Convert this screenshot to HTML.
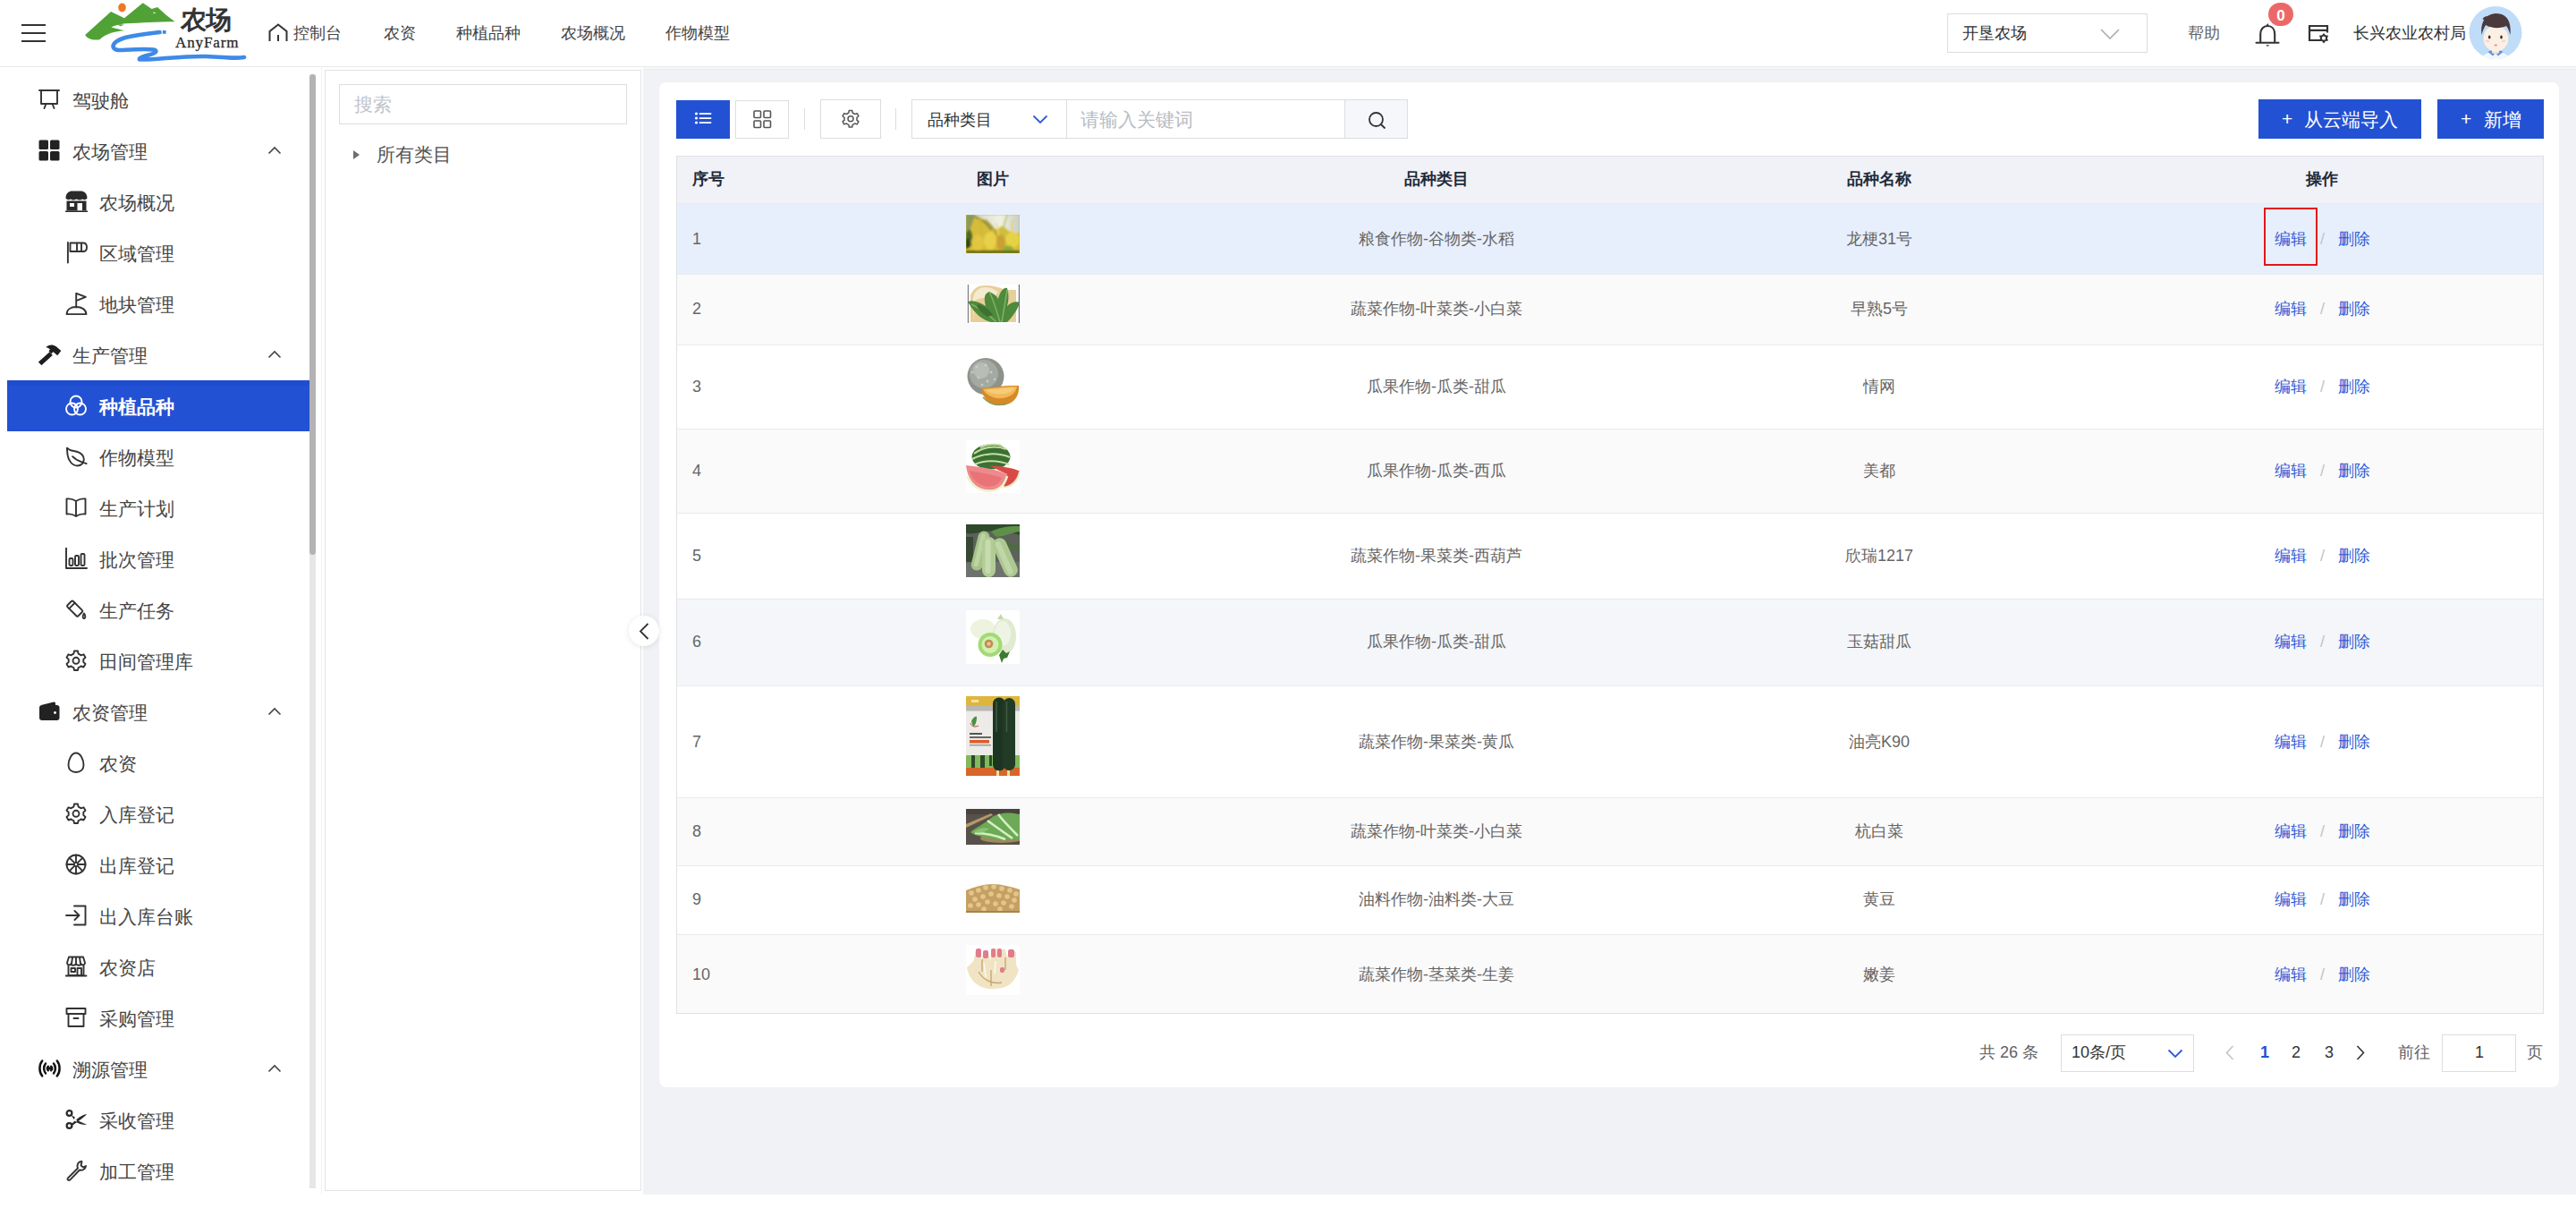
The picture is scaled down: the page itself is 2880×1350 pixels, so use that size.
<!DOCTYPE html>
<html><head><meta charset="utf-8">
<style>
*{box-sizing:border-box;margin:0;padding:0}
html,body{width:2880px;height:1350px;overflow:hidden;background:#fff;font-family:"Liberation Sans",sans-serif;color:#333}
.a{position:absolute}
.t{position:absolute;white-space:nowrap;line-height:1}
#hdr{left:0;top:0;width:2880px;height:75px;border-bottom:1px solid #e8e8e8;background:#fff}
.nav{font-size:18px;color:#444;top:28px}
#gray{left:719px;top:75px;width:2161px;height:1260px;background:#f0f2f5}
#side{left:0;top:75px;width:346px;height:1260px;background:#fff}
.mi{position:absolute;left:8px;width:338px;height:57px}
.mi .tx{position:absolute;top:18px;font-size:21px;line-height:21px;color:#3c3c3c;white-space:nowrap}
.mi svg{position:absolute}
#track{left:346px;top:83px;width:7px;height:1245px;background:#e6e6e6}
#thumb{left:346px;top:83px;width:7px;height:537px;background:#b3b3b3;border-radius:3.5px}
#tree{left:363px;top:78px;width:354px;height:1253px;border:1px solid #e2e3e5;background:#fff}
#card{left:737px;top:92px;width:2124px;height:1123px;background:#fff;border-radius:8px}
.btn{position:absolute;background:#2351d3;color:#fff}
.ob{position:absolute;border:1px solid #dcdddf;background:#fff}
.tbl{left:756px;top:174px;width:2088px;height:959px;border:1px solid #e6e8eb}
.row{position:absolute;left:757px;width:2086px;border-bottom:1px solid #ebeef5}
.cell{position:absolute;font-size:18px;line-height:18px;color:#666;white-space:nowrap}
.side{font-size:21px;line-height:21px}
.th{font-size:18px;line-height:18px;font-weight:bold;color:#1f2937}
.td{font-size:18px;line-height:18px;color:#666}
.pg{font-size:18px;line-height:18px;color:#606266}
.op{color:#2f5bd6}
</style></head><body>
<div id="hdr" class="a"></div>
<div id="gray" class="a"></div>
<div id="side" class="a"></div>
<div id="track" class="a"></div>
<div id="thumb" class="a"></div>
<div class="a" style="left:359px;top:75px;width:1px;height:1260px;background:#f2f2f2"></div>
<div class="a" style="left:719px;top:75px;width:2161px;height:2px;background:#f6f7f9"></div>
<div class="a" style="left:719px;top:77px;width:2161px;height:1px;background:#e9ebee"></div>
<div id="tree" class="a"></div>
<div id="card" class="a"></div>

<!--SIDE-->
<svg class="a" style="left:43px;top:99px" width="25" height="25" viewBox="0 0 25 25"><path d="M1,2 H23 M3,2 V17 H21 V2 M8.5,17 L6.5,22 M15.5,17 L17.5,22" stroke="#333" stroke-width="1.9" fill="none" stroke-linecap="round" stroke-linejoin="round" stroke-linecap="butt"/></svg>
<div class="t side" style="left:81px;top:101.5px;color:#464646;font-weight:normal">驾驶舱</div>
<svg class="a" style="left:43px;top:156px" width="25" height="25" viewBox="0 0 25 25"><rect x="0.5" y="0.5" width="10.5" height="10.5" rx="1.5" fill="#222"/><rect x="13" y="0.5" width="10.5" height="10.5" rx="1.5" fill="#222"/><rect x="0.5" y="13" width="10.5" height="10.5" rx="1.5" fill="#222"/><rect x="13" y="13" width="10.5" height="10.5" rx="1.5" fill="#222"/></svg>
<div class="t side" style="left:81px;top:158.5px;color:#464646;font-weight:normal">农场管理</div>
<svg class="a" style="left:299px;top:163px" width="16" height="10" viewBox="0 0 16 10"><path d="M1.5,8.5 L8,2 L14.5,8.5" fill="none" stroke="#444" stroke-width="1.6"/></svg>
<svg class="a" style="left:73px;top:213px" width="25" height="25" viewBox="0 0 25 25"><path d="M0.5,8.5 C0.5,3 4,0.5 8,0.5 H17 C21,0.5 24.5,3 24.5,8.5 C23,10.5 21,10.5 19,9.5 C17.5,10.8 15,10.8 12.5,9.5 C10,10.8 7.5,10.8 6,9.5 C4,10.5 2,10.5 0.5,8.5 Z" fill="#2a2a2a"/><path d="M1.5,11.5 V22.5 H23.5 V11.5 Z" fill="#2a2a2a"/><rect x="5" y="14" width="5" height="4" fill="#fff"/><rect x="13.5" y="14" width="5.5" height="8.5" fill="#fff"/><rect x="0" y="22.5" width="25" height="1.5" fill="#2a2a2a"/></svg>
<div class="t side" style="left:111px;top:215.5px;color:#464646;font-weight:normal">农场概况</div>
<svg class="a" style="left:73px;top:270px" width="25" height="25" viewBox="0 0 25 25"><path d="M2.9,1 V23.6" stroke="#333" stroke-width="1.9" fill="none" stroke-linecap="round" stroke-linejoin="round" stroke-linecap="butt"/><path d="M5.5,1.5 H20 C22.5,1.5 24,3.5 24,6.2 C24,9 22.5,11 20,11 H5.5 Z M13,1.5 V11 M18,1.5 V11" stroke="#333" stroke-width="1.9" fill="none" stroke-linecap="round" stroke-linejoin="round"/></svg>
<div class="t side" style="left:111px;top:272.5px;color:#464646;font-weight:normal">区域管理</div>
<svg class="a" style="left:73px;top:327px" width="25" height="25" viewBox="0 0 25 25"><path d="M12.2,16.5 V0.8 L22.8,4.8 L12.2,9.2" stroke="#333" stroke-width="1.9" fill="none" stroke-linecap="round" stroke-linejoin="round"/><path d="M1.6,24.2 C1.6,19 6,16 12.2,16 C18.4,16 23.4,19 23.4,24.2 Z" stroke="#333" stroke-width="1.9" fill="none" stroke-linecap="round" stroke-linejoin="round"/></svg>
<div class="t side" style="left:111px;top:329.5px;color:#464646;font-weight:normal">地块管理</div>
<svg class="a" style="left:43px;top:384px" width="25" height="25" viewBox="0 0 25 25"><path d="M-0.2,20.6 L12.5,9.3 L15.8,13 L3.4,24.3 Z" fill="#1e1e1e"/><path d="M8.4,4 C11,1 16,0.5 19.5,3 L25.3,8 L21.2,13.3 L16.5,9.2 L14.5,11.3 L11.4,8.2 L13,6.6 C11.8,5.4 10.4,4.6 8.4,4 Z" fill="#1e1e1e"/></svg>
<div class="t side" style="left:81px;top:386.5px;color:#464646;font-weight:normal">生产管理</div>
<svg class="a" style="left:299px;top:391px" width="16" height="10" viewBox="0 0 16 10"><path d="M1.5,8.5 L8,2 L14.5,8.5" fill="none" stroke="#444" stroke-width="1.6"/></svg>
<div class="a" style="left:8px;top:425px;width:338px;height:57px;background:#2351d3;border-top:6px solid #1f4dd0"></div>
<svg class="a" style="left:73px;top:441px" width="25" height="25" viewBox="0 0 25 25"><g fill="none" stroke="#fff" stroke-width="1.9"><circle cx="12" cy="8" r="6.5"/><circle cx="7.5" cy="16" r="6.5"/><circle cx="16.5" cy="16" r="6.5"/></g></svg>
<div class="t side" style="left:111px;top:443.5px;color:#fff;font-weight:bold">种植品种</div>
<svg class="a" style="left:73px;top:498px" width="25" height="25" viewBox="0 0 25 25"><path d="M1.9,2.6 C3.5,3.5 4.5,5 7,5.5 C9,6 11,6.3 12.8,6.7 C17,7.6 20.8,11 20.8,15.2 C20.8,19.5 17.5,22.5 13.5,22.5 C8,22.5 3,17 2.4,9 C2.2,6.5 2,4.5 1.9,2.6 Z M8.2,12.2 C10,13.8 11.5,15 13.5,16.2 C16.5,17.8 20,19 23.6,20.1" stroke="#333" stroke-width="1.9" fill="none" stroke-linecap="round" stroke-linejoin="round"/></svg>
<div class="t side" style="left:111px;top:500.5px;color:#464646;font-weight:normal">作物模型</div>
<svg class="a" style="left:73px;top:555px" width="25" height="25" viewBox="0 0 25 25"><path d="M12,5 C9,3 5,2 1.5,2.5 V19.5 C5,19 9,20 12,22 C15,20 19,19 22.5,19.5 V2.5 C19,2 15,3 12,5 Z M12,5 V22" stroke="#333" stroke-width="1.9" fill="none" stroke-linecap="round" stroke-linejoin="round"/></svg>
<div class="t side" style="left:111px;top:557.5px;color:#464646;font-weight:normal">生产计划</div>
<svg class="a" style="left:73px;top:612px" width="25" height="25" viewBox="0 0 25 25"><path d="M1,0.5 V23 H24" stroke="#333" stroke-width="1.9" fill="none" stroke-linecap="round" stroke-linejoin="round" stroke-linecap="butt"/><rect x="4.5" y="12" width="4" height="8" rx="1.2" stroke="#333" stroke-width="1.9" fill="none" stroke-linecap="round" stroke-linejoin="round"/><rect x="11" y="9" width="4" height="11" rx="1.2" stroke="#333" stroke-width="1.9" fill="none" stroke-linecap="round" stroke-linejoin="round"/><rect x="17.5" y="7" width="4" height="13" rx="1.2" stroke="#333" stroke-width="1.9" fill="none" stroke-linecap="round" stroke-linejoin="round"/></svg>
<div class="t side" style="left:111px;top:614.5px;color:#464646;font-weight:normal">批次管理</div>
<svg class="a" style="left:73px;top:669px" width="25" height="25" viewBox="0 0 25 25"><g transform="rotate(-45 11 11.5)"><rect x="6.5" y="2.5" width="9" height="17" rx="1.5" stroke="#333" stroke-width="1.9" fill="none" stroke-linecap="round" stroke-linejoin="round"/><path d="M6.5,6.5 H15.5" stroke="#333" stroke-width="1.9" fill="none" stroke-linecap="round" stroke-linejoin="round"/></g><path d="M21,16.5 C19.2,19 19.2,21.8 21,22.2 C22.8,21.8 22.8,19 21,16.5 Z" stroke="#333" stroke-width="1.9" fill="none" stroke-linecap="round" stroke-linejoin="round"/></svg>
<div class="t side" style="left:111px;top:671.5px;color:#464646;font-weight:normal">生产任务</div>
<svg class="a" style="left:73px;top:726px" width="25" height="25" viewBox="0 0 25 25"><path d="M10,1.5 H14 L14.6,4.6 C15.7,5 16.7,5.6 17.5,6.3 L20.5,5.3 L22.5,8.8 L20.2,10.9 C20.4,11.9 20.4,12.9 20.2,13.9 L22.5,16 L20.5,19.5 L17.5,18.5 C16.7,19.2 15.7,19.8 14.6,20.2 L14,23 H10 L9.4,20.2 C8.3,19.8 7.3,19.2 6.5,18.5 L3.5,19.5 L1.5,16 L3.8,13.9 C3.6,12.9 3.6,11.9 3.8,10.9 L1.5,8.8 L3.5,5.3 L6.5,6.3 C7.3,5.6 8.3,5 9.4,4.6 Z" stroke="#333" stroke-width="1.9" fill="none" stroke-linecap="round" stroke-linejoin="round"/><circle cx="12" cy="12.3" r="3.5" stroke="#333" stroke-width="1.9" fill="none" stroke-linecap="round" stroke-linejoin="round"/></svg>
<div class="t side" style="left:111px;top:728.5px;color:#464646;font-weight:normal">田间管理库</div>
<svg class="a" style="left:43px;top:783px" width="25" height="25" viewBox="0 0 25 25"><path d="M3,5 L17,1.5 C18,1.3 19,2 19,3 V5 Z" fill="#222"/><rect x="1" y="5" width="22.5" height="17" rx="3" fill="#222"/><circle cx="18.5" cy="13.5" r="1.4" fill="#fff"/></svg>
<div class="t side" style="left:81px;top:785.5px;color:#464646;font-weight:normal">农资管理</div>
<svg class="a" style="left:299px;top:790px" width="16" height="10" viewBox="0 0 16 10"><path d="M1.5,8.5 L8,2 L14.5,8.5" fill="none" stroke="#444" stroke-width="1.6"/></svg>
<svg class="a" style="left:73px;top:840px" width="25" height="25" viewBox="0 0 25 25"><path d="M12,1.5 C7,1.5 3.5,9 3.5,15 C3.5,20 7,23 12,23 C17,23 20.5,20 20.5,15 C20.5,9 17,1.5 12,1.5 Z" stroke="#333" stroke-width="1.9" fill="none" stroke-linecap="round" stroke-linejoin="round"/></svg>
<div class="t side" style="left:111px;top:842.5px;color:#464646;font-weight:normal">农资</div>
<svg class="a" style="left:73px;top:897px" width="25" height="25" viewBox="0 0 25 25"><path d="M10,1.5 H14 L14.6,4.6 C15.7,5 16.7,5.6 17.5,6.3 L20.5,5.3 L22.5,8.8 L20.2,10.9 C20.4,11.9 20.4,12.9 20.2,13.9 L22.5,16 L20.5,19.5 L17.5,18.5 C16.7,19.2 15.7,19.8 14.6,20.2 L14,23 H10 L9.4,20.2 C8.3,19.8 7.3,19.2 6.5,18.5 L3.5,19.5 L1.5,16 L3.8,13.9 C3.6,12.9 3.6,11.9 3.8,10.9 L1.5,8.8 L3.5,5.3 L6.5,6.3 C7.3,5.6 8.3,5 9.4,4.6 Z" stroke="#333" stroke-width="1.9" fill="none" stroke-linecap="round" stroke-linejoin="round"/><circle cx="12" cy="12.3" r="3.5" stroke="#333" stroke-width="1.9" fill="none" stroke-linecap="round" stroke-linejoin="round"/></svg>
<div class="t side" style="left:111px;top:899.5px;color:#464646;font-weight:normal">入库登记</div>
<svg class="a" style="left:73px;top:954px" width="25" height="25" viewBox="0 0 25 25"><circle cx="12" cy="12" r="10.5" stroke="#333" stroke-width="1.9" fill="none" stroke-linecap="round" stroke-linejoin="round"/><path d="M12,1.5 V22.5 M1.5,12 H22.5 M4.6,4.6 L19.4,19.4 M19.4,4.6 L4.6,19.4" stroke="#333" stroke-width="1.9" fill="none" stroke-linecap="round" stroke-linejoin="round"/><circle cx="12" cy="12" r="2" fill="#fff" stroke="#333" stroke-width="1.5"/></svg>
<div class="t side" style="left:111px;top:956.5px;color:#464646;font-weight:normal">出库登记</div>
<svg class="a" style="left:73px;top:1011px" width="25" height="25" viewBox="0 0 25 25"><path d="M10,1.5 H22.5 V22.5 H10 M1,12 H15 M10.5,7 L15.5,12 L10.5,17" stroke="#333" stroke-width="1.9" fill="none" stroke-linecap="round" stroke-linejoin="round"/></svg>
<div class="t side" style="left:111px;top:1013.5px;color:#464646;font-weight:normal">出入库台账</div>
<svg class="a" style="left:73px;top:1068px" width="25" height="25" viewBox="0 0 25 25"><path d="M2,8 L4,1.5 H20 L22,8 C22,10.5 19.5,11 18,9.5 C16.5,11 14,11 12,9.5 C10,11 7.5,11 6,9.5 C4.5,11 2,10.5 2,8 Z M3.5,11 V22 H20.5 V11 M0.5,22.5 H23.5 M8,2 L7,9 M12,2 V9 M16,2 L17,9" stroke="#333" stroke-width="1.9" fill="none" stroke-linecap="round" stroke-linejoin="round"/><rect x="6.5" y="14" width="4.5" height="4" stroke="#333" stroke-width="1.9" fill="none" stroke-linecap="round" stroke-linejoin="round"/><rect x="13.5" y="14" width="4.5" height="8" stroke="#333" stroke-width="1.9" fill="none" stroke-linecap="round" stroke-linejoin="round"/></svg>
<div class="t side" style="left:111px;top:1070.5px;color:#464646;font-weight:normal">农资店</div>
<svg class="a" style="left:73px;top:1125px" width="25" height="25" viewBox="0 0 25 25"><path d="M1.5,2 H22.5 V8 H1.5 Z M3.5,8 V22 H20.5 V8 M9.5,13 H14.5" stroke="#333" stroke-width="1.9" fill="none" stroke-linecap="round" stroke-linejoin="round" stroke-linecap="butt"/></svg>
<div class="t side" style="left:111px;top:1127.5px;color:#464646;font-weight:normal">采购管理</div>
<svg class="a" style="left:43px;top:1182px" width="25" height="25" viewBox="0 0 25 25"><g fill="none" stroke="#111" stroke-width="2.5" stroke-linecap="round"><path d="M4.2,3.5 C0.5,8 0.5,16 4.2,20.5 M20.8,3.5 C24.5,8 24.5,16 20.8,20.5"/><path d="M8,6.5 C5.5,9.5 5.5,14.5 8,17.5 M17,6.5 C19.5,9.5 19.5,14.5 17,17.5"/><path d="M10.8,9.8 C9.8,11 9.8,13 10.8,14.2 M14.2,9.8 C15.2,11 15.2,13 14.2,14.2"/></g><circle cx="12.5" cy="12" r="1.7" fill="#111"/></svg>
<div class="t side" style="left:81px;top:1184.5px;color:#464646;font-weight:normal">溯源管理</div>
<svg class="a" style="left:299px;top:1189px" width="16" height="10" viewBox="0 0 16 10"><path d="M1.5,8.5 L8,2 L14.5,8.5" fill="none" stroke="#444" stroke-width="1.6"/></svg>
<svg class="a" style="left:73px;top:1239px" width="25" height="25" viewBox="0 0 25 25"><circle cx="4.5" cy="5" r="2.9" fill="none" stroke="#2a2a2a" stroke-width="2.2"/><circle cx="4.5" cy="19" r="2.9" fill="none" stroke="#2a2a2a" stroke-width="2.2"/><path d="M6.5,6.8 L11,9.8 L9.5,12 Z" fill="#2a2a2a"/><path d="M6.6,17.2 L12,12.5 C16,9 20,6.6 24,6 C22,9 16.5,12.5 12.5,15.5 L7.6,19 Z" fill="#2a2a2a"/><path d="M13,13.2 C17,14.5 21,16 24,18 C20,18.5 16,17 12,15 Z" fill="#2a2a2a"/><circle cx="12" cy="13.4" r="1" fill="#fff"/></svg>
<div class="t side" style="left:111px;top:1241.5px;color:#464646;font-weight:normal">采收管理</div>
<svg class="a" style="left:73px;top:1296px" width="25" height="25" viewBox="0 0 25 25"><path d="M14,9.5 L3,20.5 C2,21.5 2.5,23 4,23 C4.5,23 5,22.8 5.5,22.3 L16,11.5 C19,12.5 22.5,10.5 23,7 L20,8.5 L17.5,6.5 L18.5,2 C14.5,1.5 12.5,6 14,9.5 Z" stroke="#333" stroke-width="1.9" fill="none" stroke-linecap="round" stroke-linejoin="round"/></svg>
<div class="t side" style="left:111px;top:1298.5px;color:#464646;font-weight:normal">加工管理</div>
<!--/SIDE-->
<!-- header -->
<div class="a" style="left:24px;top:27px;width:27px;height:2.2px;background:#333"></div>
<div class="a" style="left:24px;top:36px;width:27px;height:2.2px;background:#333"></div>
<div class="a" style="left:24px;top:45px;width:27px;height:2.2px;background:#333"></div>
<svg class="a" style="left:0;top:0" width="300" height="75" viewBox="0 0 300 75">
 <path d="M95.2,39 L124,12.9 L139,20.3 L159.7,3.3 L169.6,10 L176,8 L186,17 L195.5,24.3 C175,24.5 158,25.5 140,26.3 C134,27 128,28.5 124.3,30.6 L139.4,34.3 C128,34.8 118,38 111.4,44.2 C104,45.5 97,43 95.2,39 Z" fill="#51a236"/>
 <path d="M134,17 C136,18 138,18 140,17.5 L138.6,19.4 Z" fill="#fff"/>
 <path d="M171,13.5 L174.5,14.5 L172,15.2 Z" fill="#fff"/>
 <path d="M132,27.8 C134,27 137,27.4 139,27.8 L134.5,29.2 Z" fill="#51a236"/>
 <ellipse cx="136.5" cy="8.5" rx="4.3" ry="5" fill="#ec7a24"/>
 <path d="M178.5,36 C165,37.5 150,39.5 140,42 C132,44.5 126.5,48 126.5,52 C127,56 132,56.5 140,55.8 C152,55 165,54.5 172,55.5 C176,56.5 175,59 168,61 C160,63 155,65 156,66.5 C175,67 200,62.5 230,63 C250,63.5 262,66 273,64" fill="none" stroke="#3e8ae8" stroke-width="4.6" stroke-linecap="round" stroke-linejoin="round"/>
 <rect x="181.8" y="34" width="3.8" height="3.8" fill="#3e8ae8"/>
</svg>
<div class="t" style="left:202px;top:8px;font-size:29px;font-weight:900;color:#333;font-family:'Liberation Serif',serif;letter-spacing:-1px">农场</div>
<div class="t" style="left:196px;top:38px;font-size:17px;color:#2a2a2a;font-family:'Liberation Serif',serif;letter-spacing:0.9px;top:39px;-webkit-text-stroke:0.3px #2a2a2a">AnyFarm</div>
<svg class="a" style="left:300px;top:26px" width="22" height="21" viewBox="0 0 22 21"><path d="M1.5,20 V9 L11,1.5 L20.5,9 V20 M11,13 V20" fill="none" stroke="#333" stroke-width="2"/></svg>
<div class="t nav" style="left:328px">控制台</div>
<div class="t nav" style="left:429px">农资</div>
<div class="t nav" style="left:510px">种植品种</div>
<div class="t nav" style="left:627px">农场概况</div>
<div class="t nav" style="left:744px">作物模型</div>
<div class="ob" style="left:2177px;top:15px;width:224px;height:44px;border-color:#dcdddf"></div>
<div class="t nav" style="left:2194px;color:#333">开垦农场</div>
<svg class="a" style="left:2348px;top:32px" width="22" height="12" viewBox="0 0 22 12"><path d="M1,1 L11,11 L21,1" fill="none" stroke="#a8abb2" stroke-width="1.6"/></svg>
<div class="t nav" style="left:2446px;color:#666">帮助</div>
<svg class="a" style="left:2520px;top:24px" width="30" height="30" viewBox="0 0 30 30"><path d="M2.5,23.8 H27.5 M7.2,23.8 V14 C7.2,8.5 10.5,5 15.2,5 C19.9,5 23.2,8.5 23.2,14 V23.8" fill="none" stroke="#333" stroke-width="2.1" stroke-linecap="round"/><path d="M13.6,4.5 L15.2,2 L16.8,4.5 Z" fill="#333"/><path d="M13.2,26.3 H17.2 L15.2,28 Z" fill="#333"/></svg>
<div class="a" style="left:2536px;top:3px;width:28px;height:26px;border-radius:13px;background:#ec6868"></div>
<div class="t" style="left:2536px;top:9px;width:28px;text-align:center;font-size:17px;font-weight:bold;color:#fff">0</div>
<svg class="a" style="left:2580px;top:27px" width="26" height="24" viewBox="0 0 26 24"><path d="M16,18 H2 V2 H22 V9.5 M2,6.8 H22" fill="none" stroke="#333" stroke-width="2.2"/><polygon points="18.00,9.90 16.05,12.32 12.98,12.80 14.10,15.70 12.98,18.60 16.05,19.08 18.00,21.50 19.95,19.08 23.02,18.60 21.90,15.70 23.02,12.80 19.95,12.32" fill="#333"/><circle cx="18" cy="15.7" r="2.1" fill="#fff"/></svg>
<div class="t nav" style="left:2631px;color:#333">长兴农业农村局</div>
<svg class="a" style="left:2760px;top:7px" width="60" height="60" viewBox="0 0 60 60">
 <defs><clipPath id="avc"><circle cx="30" cy="29.5" r="29.5"/></clipPath></defs>
 <circle cx="30" cy="29.5" r="29.5" fill="#bfdcf8"/>
 <g clip-path="url(#avc)">
 <path d="M12,62 C14,54 22,51 30,51 C38,51 46,54 48,62 Z" fill="#f4f7fb"/>
 <path d="M21.5,51 L27,55.5 L30,52.5 L33,55.5 L38.5,51 L34,48.5 H26 Z" fill="#5d97e6"/>
 <path d="M26,46 H34 V52 L30,54 L26,52 Z" fill="#f6e3d4"/>
 <ellipse cx="30.5" cy="36" rx="14" ry="14.5" fill="#fcefe4"/>
 <path d="M14.5,32 C13,20 17,9 30,8 C42,8 48,16 46.5,32 C45,27 44,24 42,22 C36,25 26,25 19,21 C17,24 15.5,28 14.5,32 Z" fill="#4a3a3c"/>
 <path d="M15.5,14 C17,12 19,11 21,11 L18,16 Z" fill="#4a3a3c"/>
 <ellipse cx="23.2" cy="34.4" rx="1.3" ry="2" fill="#3a3030"/><ellipse cx="36.5" cy="34.4" rx="1.3" ry="2" fill="#3a3030"/>
 <ellipse cx="21" cy="39" rx="2.5" ry="1.3" fill="#f6d8d0"/><ellipse cx="39" cy="39" rx="2.5" ry="1.3" fill="#f6d8d0"/>
 <ellipse cx="30.3" cy="43.5" rx="1.8" ry="0.9" fill="#f08a8a"/>
 </g>
</svg>

<!--MAIN-->
<div class="ob" style="left:379px;top:94px;width:322px;height:45px;border-color:#dcdddf"></div>
<div class="t" style="left:396px;top:106px;font-size:21px;color:#c0c4cc">搜索</div>
<svg class="a" style="left:394px;top:167px" width="9" height="12" viewBox="0 0 9 12"><path d="M1,1 L8,6 L1,11 Z" fill="#6b6e73"/></svg>
<div class="t" style="left:421px;top:162px;font-size:21px;color:#555">所有类目</div>
<div class="a" style="left:703px;top:688px;width:34px;height:34px;border-radius:17px;background:#fff;box-shadow:0 1px 6px rgba(0,0,0,0.10)"></div>
<svg class="a" style="left:714px;top:696px" width="12" height="19" viewBox="0 0 12 19"><path d="M10.5,1 L2,9.5 L10.5,18" fill="none" stroke="#333" stroke-width="1.8"/></svg>
<div class="btn" style="left:756px;top:112px;width:60px;height:43px"></div>
<svg class="a" style="left:776px;top:121px" width="22" height="22" viewBox="0 0 22 22"><g fill="#fff"><circle cx="2.5" cy="6" r="1.6"/><circle cx="2.5" cy="11" r="1.6"/><circle cx="2.5" cy="16" r="1.6"/><rect x="5.5" y="5.2" width="14" height="1.7" rx=".8"/><rect x="5.5" y="10.2" width="14" height="1.7" rx=".8"/><rect x="5.5" y="15.2" width="14" height="1.7" rx=".8"/></g></svg>
<div class="ob" style="left:822px;top:112px;width:60px;height:43px;border-color:#dcdddf"></div>
<svg class="a" style="left:842px;top:123px" width="21" height="21" viewBox="0 0 21 21"><g fill="none" stroke="#555" stroke-width="1.6"><rect x="1" y="1" width="7.5" height="7.5" rx="1"/><rect x="12" y="1" width="7.5" height="7.5" rx="1"/><rect x="1" y="12" width="7.5" height="7.5" rx="1"/><rect x="12" y="12" width="7.5" height="7.5" rx="1"/></g></svg>
<div class="a" style="left:899px;top:121px;width:1px;height:24px;background:#dcdddf"></div>
<div class="ob" style="left:917px;top:111px;width:68px;height:44px;border-color:#dcdddf"></div>
<svg class="a" style="left:940px;top:122px" width="22" height="22" viewBox="0 0 22 22"><path d="M9.3,1.5 H12.7 L13.2,4.2 C14.1,4.5 14.9,5 15.6,5.6 L18.2,4.7 L19.9,7.7 L17.9,9.5 C18.1,10.4 18.1,11.2 17.9,12.1 L19.9,13.9 L18.2,16.9 L15.6,16 C14.9,16.6 14.1,17.1 13.2,17.4 L12.7,20.1 H9.3 L8.8,17.4 C7.9,17.1 7.1,16.6 6.4,16 L3.8,16.9 L2.1,13.9 L4.1,12.1 C3.9,11.2 3.9,10.4 4.1,9.5 L2.1,7.7 L3.8,4.7 L6.4,5.6 C7.1,5 7.9,4.5 8.8,4.2 Z" fill="none" stroke="#555" stroke-width="1.5" stroke-linejoin="round"/><circle cx="11" cy="10.8" r="3" fill="none" stroke="#555" stroke-width="1.5"/></svg>
<div class="a" style="left:1001px;top:121px;width:1px;height:24px;background:#dcdddf"></div>
<div class="ob" style="left:1019px;top:111px;width:555px;height:44px;border-color:#dcdddf"></div>
<div class="a" style="left:1192px;top:112px;width:1px;height:42px;background:#dcdddf"></div>
<div class="a" style="left:1503px;top:112px;width:70px;height:42px;background:#f5f7fa;border-left:1px solid #dcdddf"></div>
<div class="t" style="left:1037px;top:125px;font-size:18px;color:#333">品种类目</div>
<svg class="a" style="left:1154px;top:128px" width="18" height="11" viewBox="0 0 18 11"><path d="M1.5,1.5 L9,9 L16.5,1.5" fill="none" stroke="#2f5bd6" stroke-width="1.8"/></svg>
<div class="t" style="left:1208px;top:123px;font-size:21px;color:#b8bcc4">请输入关键词</div>
<svg class="a" style="left:1529px;top:124px" width="22" height="22" viewBox="0 0 22 22"><circle cx="9.5" cy="9.5" r="7.5" fill="none" stroke="#333" stroke-width="1.8"/><path d="M15,15 L19.5,19.5" stroke="#333" stroke-width="1.8"/></svg>
<div class="btn" style="left:2525px;top:111px;width:182px;height:44px"></div>
<div class="t" style="left:2551px;top:122px;font-size:21px;color:#fff">+</div>
<div class="t" style="left:2576px;top:123px;font-size:21px;color:#fff">从云端导入</div>
<div class="btn" style="left:2725px;top:111px;width:119px;height:44px"></div>
<div class="t" style="left:2751px;top:122px;font-size:21px;color:#fff">+</div>
<div class="t" style="left:2777px;top:123px;font-size:21px;color:#fff">新增</div>
<div class="a" style="left:757px;top:175px;width:2086px;height:52px;background:#f0f2f7"></div>
<div class="t th" style="left:774px;top:191px">序号</div>
<div class="t th" style="left:1074px;top:191px;width:72px;text-align:center">图片</div>
<div class="t th" style="left:1556px;top:191px;width:100px;text-align:center">品种类目</div>
<div class="t th" style="left:2051px;top:191px;width:100px;text-align:center">品种名称</div>
<div class="t th" style="left:2546px;top:191px;width:100px;text-align:center">操作</div>
<div class="a" style="left:757px;top:227px;width:2086px;height:79px;background:#e8effc;border-top:1px solid #e9eaec"></div>
<div class="t td" style="left:774px;top:258px">1</div>
<svg class="a" style="left:1080px;top:240px" width="60" height="43" viewBox="0 0 60 43" preserveAspectRatio="none"><defs><filter id="rb" x="-10%" y="-10%" width="120%" height="120%"><feGaussianBlur stdDeviation="0.8"/></filter>
<linearGradient id="rsky" x1="0" y1="0" x2="1" y2="0"><stop offset="0" stop-color="#d8dcc8"/><stop offset="0.6" stop-color="#f0f0e6"/><stop offset="1" stop-color="#c8ceca"/></linearGradient></defs>
<rect width="60" height="43" fill="#d6bc3a"/>
<g filter="url(#rb)">
<path d="M8,0 H60 V20 C55,22 52,20 48,18 C44,16 42,10 38,14 C34,18 30,16 26,10 C22,4 16,4 8,0 Z" fill="url(#rsky)"/>
<path d="M0,0 H10 C8,6 6,12 4,18 L0,22 Z" fill="#8a9a5a"/>
<path d="M0,20 L4,16 C7,20 8,26 7,34 L0,38 Z" fill="#4e6a24"/>
<path d="M0,28 L3,26 L4,36 L0,38 Z" fill="#22380e"/>
<g fill="none" stroke-linecap="round">
<path d="M10,2 C16,4 22,8 28,16" stroke="#8a8a3a" stroke-width="2.2"/>
<path d="M16,4 C17,10 18,16 17,24" stroke="#c8b838" stroke-width="2"/>
<path d="M22,6 C27,10 32,16 36,24" stroke="#a89830" stroke-width="1.8"/>
<path d="M46,1 C43,8 41,16 42,24" stroke="#b8c450" stroke-width="1.6"/>
<path d="M52,6 C51,14 51,20 54,26" stroke="#e4d450" stroke-width="2"/>
<path d="M34,10 C35,14 35,20 37,24" stroke="#ecdc60" stroke-width="1.6"/>
</g>
<ellipse cx="13" cy="31" rx="7" ry="9" fill="#e2c640"/>
<ellipse cx="27" cy="29" rx="7" ry="10" fill="#e8d048"/>
<ellipse cx="39" cy="31" rx="5" ry="9" fill="#c9a034"/>
<ellipse cx="52" cy="28" rx="8" ry="9" fill="#e6d244"/>
<ellipse cx="47" cy="38" rx="6" ry="3.5" fill="#8eae3a"/>
<rect x="0" y="40" width="60" height="3" fill="#5e6218"/>
</g></svg>
<div class="t td" style="left:1406px;top:258px;width:400px;text-align:center">粮食作物-谷物类-水稻</div>
<div class="t td" style="left:1901px;top:258px;width:400px;text-align:center">龙梗31号</div>
<div class="t td op" style="left:2543px;top:258px">编辑</div>
<div class="t td" style="left:2594px;top:258px;color:#c0c4cc">/</div>
<div class="t td op" style="left:2614px;top:258px">删除</div>
<div class="a" style="left:757px;top:306px;width:2086px;height:79px;background:#fafafa;border-top:1px solid #e9eaec"></div>
<div class="t td" style="left:774px;top:336px">2</div>
<svg class="a" style="left:1080px;top:318px" width="60" height="44" viewBox="0 0 60 44" preserveAspectRatio="none"><defs><filter id="bkf" x="-5%" y="-5%" width="110%" height="110%"><feGaussianBlur stdDeviation="0.6"/></filter></defs><rect width="60" height="44" fill="#fff"/><g filter="url(#bkf)">
<path d="M5,42 V12 C8,4 14,1 22,1 C30,1 38,3 44,6 H56 V42 Z" fill="#e6cf98"/>
<path d="M8,40 V14 C10,6 16,3 22,3 C28,3 32,6 36,8 L30,16 C24,14 16,14 10,18 Z" fill="#f4ead0"/>
<path d="M2,19 C8,17 16,20 22,24 C20,16 20,10 26,8 C30,10 34,12 36,16 C38,8 42,3 46,4 C48,10 48,18 46,24 C50,20 56,18 60,20 C58,28 52,36 46,42 H28 C20,40 10,34 2,19 Z" fill="#4e8a3a"/>
<path d="M26,8 C30,16 34,28 38,42 M46,6 C44,18 42,30 40,42 M6,22 C14,26 24,32 34,42" stroke="#7eb068" stroke-width="1.6" fill="none"/>
<path d="M14,22 C20,24 26,28 30,34 L24,36 C18,32 14,28 12,24 Z" fill="#3c7030"/>
</g>
<rect x="1.8" y="0" width="1.2" height="43" fill="#7a7d86"/><rect x="58.8" y="0" width="1.2" height="43" fill="#6a6d76"/></svg>
<div class="t td" style="left:1406px;top:336px;width:400px;text-align:center">蔬菜作物-叶菜类-小白菜</div>
<div class="t td" style="left:1901px;top:336px;width:400px;text-align:center">早熟5号</div>
<div class="t td op" style="left:2543px;top:336px">编辑</div>
<div class="t td" style="left:2594px;top:336px;color:#c0c4cc">/</div>
<div class="t td op" style="left:2614px;top:336px">删除</div>
<div class="a" style="left:757px;top:385px;width:2086px;height:94px;background:#fff;border-top:1px solid #e9eaec"></div>
<div class="t td" style="left:774px;top:423px">3</div>
<svg class="a" style="left:1080px;top:398px" width="60" height="56" viewBox="0 0 60 56" preserveAspectRatio="none"><defs><filter id="mlf" x="-5%" y="-5%" width="110%" height="110%"><feGaussianBlur stdDeviation="0.5"/></filter></defs><rect width="60" height="56" fill="#fff"/><g filter="url(#mlf)">
<circle cx="22" cy="22.5" r="20.5" fill="#8d928b"/>
<circle cx="20" cy="20" r="16" fill="#a4a9a2"/>
<circle cx="17" cy="16" r="9" fill="#b8bcb5"/>
<g fill="#d0d3cc" opacity="0.8"><circle cx="12" cy="12" r="1.5"/><circle cx="22" cy="10" r="1.5"/><circle cx="28" cy="18" r="1.5"/><circle cx="14" cy="24" r="1.5"/><circle cx="7" cy="18" r="1.3"/><circle cx="24" cy="28" r="1.5"/><circle cx="32" cy="26" r="1.3"/><circle cx="18" cy="32" r="1.3"/></g>
<path d="M16.5,36 C26,35 44,32.5 59,33 C60,44 54,54 40,55 C28,56 19,48 16.5,36 Z" fill="#d58a26"/>
<path d="M19,37 C28,36 44,34 57,34 C56,41 50,46 40,47 C30,48 22,43 19,37 Z" fill="#f2b85a"/>
<path d="M22,38 C30,37 42,35.5 54,35.5 C52,40 46,42 40,42.5 C32,43 26,41 22,38 Z" fill="#f6cc78"/>
<path d="M19,46 C26,54 36,56 46,53" stroke="#8a9a5a" stroke-width="1.6" fill="none"/>
</g></svg>
<div class="t td" style="left:1406px;top:423px;width:400px;text-align:center">瓜果作物-瓜类-甜瓜</div>
<div class="t td" style="left:1901px;top:423px;width:400px;text-align:center">情网</div>
<div class="t td op" style="left:2543px;top:423px">编辑</div>
<div class="t td" style="left:2594px;top:423px;color:#c0c4cc">/</div>
<div class="t td op" style="left:2614px;top:423px">删除</div>
<div class="a" style="left:757px;top:479px;width:2086px;height:94px;background:#fafafa;border-top:1px solid #e9eaec"></div>
<div class="t td" style="left:774px;top:517px">4</div>
<svg class="a" style="left:1080px;top:492px" width="60" height="59" viewBox="0 0 60 59" preserveAspectRatio="none"><defs><filter id="wmf" x="-5%" y="-5%" width="110%" height="110%"><feGaussianBlur stdDeviation="0.5"/></filter></defs><rect width="60" height="59" fill="#fff"/><g filter="url(#wmf)">
<ellipse cx="28" cy="18.5" rx="21.5" ry="14" fill="#3a7034"/>
<g fill="none" stroke="#c4dea0" stroke-width="2">
<path d="M9,15 C18,8 32,5 45,10"/><path d="M7,21 C18,15 34,13 49,19"/><path d="M10,27 C20,22 36,22 48,27"/><path d="M16,8 C24,4 34,4 40,6"/>
</g>
<path d="M26,28.5 C40,28.5 54,31.5 60,34.5 C58,46 50,52 42,52.5 L46,38 Z" fill="#d94a44"/>
<path d="M0,28 C16,29.5 34,32.5 46,38 C45,48 38,56 26,56 C10,55 2,44 0,28 Z" fill="#ec8a8c"/>
<path d="M4,34 C14,36 28,38 40,42 C38,48 32,52 24,52 C14,50 6,44 4,34 Z" fill="#e8696e" opacity="0.7"/>
<path d="M1.5,40 C7,53 18,57 28,56.5 C37,56 43,51 46,40" fill="none" stroke="#eef2cc" stroke-width="2.6"/>
<path d="M42,52.5 C50,52 58,46 60,35" fill="none" stroke="#e6ecc0" stroke-width="2"/>
</g></svg>
<div class="t td" style="left:1406px;top:517px;width:400px;text-align:center">瓜果作物-瓜类-西瓜</div>
<div class="t td" style="left:1901px;top:517px;width:400px;text-align:center">美都</div>
<div class="t td op" style="left:2543px;top:517px">编辑</div>
<div class="t td" style="left:2594px;top:517px;color:#c0c4cc">/</div>
<div class="t td op" style="left:2614px;top:517px">删除</div>
<div class="a" style="left:757px;top:573px;width:2086px;height:96px;background:#fff;border-top:1px solid #e9eaec"></div>
<div class="t td" style="left:774px;top:612px">5</div>
<svg class="a" style="left:1080px;top:586px" width="60" height="59" viewBox="0 0 60 59" preserveAspectRatio="none"><defs><filter id="zkf" x="-5%" y="-5%" width="110%" height="110%"><feGaussianBlur stdDeviation="0.7"/></filter></defs><rect width="60" height="59" fill="#5c615a"/><g filter="url(#zkf)">
<path d="M0,0 H60 V12 C50,8 40,12 30,8 C20,6 10,12 0,10 Z" fill="#2e4a2c"/>
<path d="M28,8 C40,2 52,2 60,2 V8 C50,10 40,14 34,14 Z" fill="#5f9048"/>
<path d="M40,16 C48,20 56,24 60,26 V31 C52,27 44,23 38,20 Z" fill="#4a6e3a"/>
<rect x="0" y="14" width="8" height="30" fill="#354a32"/>
<rect x="0" y="42" width="60" height="17" fill="#72766f" opacity="0.8"/>
<g transform="rotate(14 16 30)"><rect x="9.5" y="7" width="13" height="45" rx="6.5" fill="#a6c28a"/><rect x="12.5" y="10" width="5" height="38" rx="2.5" fill="#bcd4a2"/></g>
<rect x="18" y="14" width="15" height="45" rx="7.5" fill="#b2cc96"/><rect x="21.5" y="17" width="6" height="38" rx="3" fill="#c6dcae"/>
<g transform="rotate(-24 44 38)"><rect x="36.5" y="14" width="15.5" height="46" rx="7.7" fill="#adc892"/><rect x="40" y="17" width="6" height="40" rx="3" fill="#c0d6a6"/></g>
</g></svg>
<div class="t td" style="left:1406px;top:612px;width:400px;text-align:center">蔬菜作物-果菜类-西葫芦</div>
<div class="t td" style="left:1901px;top:612px;width:400px;text-align:center">欣瑞1217</div>
<div class="t td op" style="left:2543px;top:612px">编辑</div>
<div class="t td" style="left:2594px;top:612px;color:#c0c4cc">/</div>
<div class="t td op" style="left:2614px;top:612px">删除</div>
<div class="a" style="left:757px;top:669px;width:2086px;height:97px;background:#f4f6f9;border-top:1px solid #e9eaec"></div>
<div class="t td" style="left:774px;top:708px">6</div>
<svg class="a" style="left:1080px;top:682px" width="60" height="60" viewBox="0 0 60 60" preserveAspectRatio="none"><defs><filter id="hdf" x="-5%" y="-5%" width="110%" height="110%"><feGaussianBlur stdDeviation="0.6"/></filter></defs><rect width="60" height="60" fill="#fff"/><g filter="url(#hdf)">
<ellipse cx="19" cy="21" rx="14" ry="11" fill="#edf3de"/>
<ellipse cx="43" cy="29" rx="13" ry="20" fill="#e0ead0"/>
<ellipse cx="41" cy="26" rx="9" ry="14" fill="#eef4e4"/>
<path d="M35,10 L39,4 L42,10 Z" fill="#c4d8a4"/>
<circle cx="27" cy="38.5" r="13.5" fill="#a2da74"/>
<circle cx="27" cy="38.5" r="9.5" fill="#d2f0b2"/>
<circle cx="25.5" cy="37.5" r="4.8" fill="#c08c54"/>
<circle cx="25.5" cy="37.5" r="2.2" fill="#e4c48c"/>
<path d="M37,50 L41,44 L45,48 L49,46 L46,53 L42,54 L40,59 Z" fill="#3c7834"/>
</g></svg>
<div class="t td" style="left:1406px;top:708px;width:400px;text-align:center">瓜果作物-瓜类-甜瓜</div>
<div class="t td" style="left:1901px;top:708px;width:400px;text-align:center">玉菇甜瓜</div>
<div class="t td op" style="left:2543px;top:708px">编辑</div>
<div class="t td" style="left:2594px;top:708px;color:#c0c4cc">/</div>
<div class="t td op" style="left:2614px;top:708px">删除</div>
<div class="a" style="left:757px;top:766px;width:2086px;height:125px;background:#fff;border-top:1px solid #e9eaec"></div>
<div class="t td" style="left:774px;top:820px">7</div>
<svg class="a" style="left:1080px;top:778px" width="60" height="89" viewBox="0 0 60 89" preserveAspectRatio="none"><defs><filter id="ckf" x="-5%" y="-5%" width="110%" height="110%"><feGaussianBlur stdDeviation="0.5"/></filter></defs><rect width="60" height="89" fill="#ecebe7"/><g filter="url(#ckf)">
<rect width="60" height="11" fill="#dfb63c"/>
<rect x="6" y="4" width="8" height="3" fill="#f6e2a0"/>
<rect y="11" width="60" height="5.5" fill="#b8b8b4"/>
<rect y="66" width="60" height="14" fill="#80ba5c"/>
<g fill="#2e4a2c"><rect x="6" y="66" width="4" height="14"/><rect x="16" y="66" width="5" height="14"/><rect x="26" y="66" width="3" height="12"/></g>
<rect y="80" width="60" height="9" fill="#d6662c"/>
<path d="M6,28 C8,24 10,22 12,23 C12,28 11,32 8,34 Z" fill="#4a9040"/>
<path d="M5,30 C6,34 10,35 14,33" stroke="#c83838" stroke-width="1" fill="none"/>
<rect x="4" y="41" width="14" height="2" fill="#555"/><rect x="4" y="45" width="24" height="2" fill="#666"/>
<rect x="4" y="49" width="22" height="3.5" fill="#e25a2a"/><rect x="4" y="54" width="24" height="1.5" fill="#999"/>
<rect x="30" y="1.5" width="14" height="82" rx="7" fill="#1f3523"/>
<rect x="41.5" y="2" width="13.5" height="81" rx="6.8" fill="#223a27"/>
<path d="M34,6 V40 M45.5,6 V40" stroke="#50684c" stroke-width="1.6" opacity="0.7"/>
<rect x="34" y="83" width="3" height="6" fill="#e8e0a0"/><rect x="46" y="83" width="3" height="6" fill="#e8e0a0"/>
</g></svg>
<div class="t td" style="left:1406px;top:820px;width:400px;text-align:center">蔬菜作物-果菜类-黄瓜</div>
<div class="t td" style="left:1901px;top:820px;width:400px;text-align:center">油亮K90</div>
<div class="t td op" style="left:2543px;top:820px">编辑</div>
<div class="t td" style="left:2594px;top:820px;color:#c0c4cc">/</div>
<div class="t td op" style="left:2614px;top:820px">删除</div>
<div class="a" style="left:757px;top:891px;width:2086px;height:76px;background:#fafafa;border-top:1px solid #e9eaec"></div>
<div class="t td" style="left:774px;top:920px">8</div>
<svg class="a" style="left:1080px;top:904px" width="60" height="40" viewBox="0 0 60 40" preserveAspectRatio="none"><defs><filter id="b2f" x="-5%" y="-5%" width="110%" height="110%"><feGaussianBlur stdDeviation="0.6"/></filter></defs><rect width="60" height="40" fill="#58504a"/><g filter="url(#b2f)">
<rect width="60" height="6" fill="#4a423c"/>
<path d="M0,17 L28,5 L30,7 L0,21 Z" fill="#b49868"/>
<ellipse cx="40" cy="33" rx="24" ry="5" fill="#9c8a5c"/>
<path d="M5,26 C12,20 22,16 28,10 C38,3 50,4 60,6 V34 C48,35 36,35 28,33 C18,31 9,30 5,26 Z" fill="#6caa54"/>
<path d="M10,27 C20,27 32,29 44,34 M24,13 C32,19 42,26 52,33 M36,6 C42,14 50,22 58,30" stroke="#d6eec4" stroke-width="2.6" fill="none"/>
<path d="M8,26 C14,22 20,20 26,22 C22,26 14,28 8,26 Z" fill="#8cc072"/>
</g></svg>
<div class="t td" style="left:1406px;top:920px;width:400px;text-align:center">蔬菜作物-叶菜类-小白菜</div>
<div class="t td" style="left:1901px;top:920px;width:400px;text-align:center">杭白菜</div>
<div class="t td op" style="left:2543px;top:920px">编辑</div>
<div class="t td" style="left:2594px;top:920px;color:#c0c4cc">/</div>
<div class="t td op" style="left:2614px;top:920px">删除</div>
<div class="a" style="left:757px;top:967px;width:2086px;height:77px;background:#fff;border-top:1px solid #e9eaec"></div>
<div class="t td" style="left:774px;top:996px">9</div>
<svg class="a" style="left:1080px;top:986px" width="60" height="34" viewBox="0 0 60 34" preserveAspectRatio="none"><defs><filter id="syf" x="-5%" y="-5%" width="110%" height="110%"><feGaussianBlur stdDeviation="0.4"/></filter></defs><rect width="60" height="34" fill="#fff"/><g filter="url(#syf)">
<path d="M0,9 C10,5 20,2 30,2 C40,2 50,5 60,8 V34 H0 Z" fill="#c6a062"/>
<g fill="#e2c68c"><circle cx="6" cy="12" r="2.8"/><circle cx="14" cy="9" r="2.8"/><circle cx="22" cy="6" r="2.8"/><circle cx="31" cy="5" r="2.8"/><circle cx="40" cy="7" r="2.8"/><circle cx="49" cy="9" r="2.8"/><circle cx="56" cy="13" r="2.8"/>
<circle cx="10" cy="19" r="2.8"/><circle cx="19" cy="16" r="2.8"/><circle cx="28" cy="13" r="2.8"/><circle cx="37" cy="15" r="2.8"/><circle cx="46" cy="16" r="2.8"/><circle cx="54" cy="20" r="2.8"/>
<circle cx="5" cy="26" r="2.8"/><circle cx="14" cy="25" r="2.8"/><circle cx="24" cy="22" r="2.8"/><circle cx="33" cy="24" r="2.8"/><circle cx="42" cy="23" r="2.8"/><circle cx="51" cy="27" r="2.8"/><circle cx="20" cy="30" r="2.8"/><circle cx="38" cy="30" r="2.8"/></g>
<rect y="32" width="60" height="2" fill="#a88448"/>
</g></svg>
<div class="t td" style="left:1406px;top:996px;width:400px;text-align:center">油料作物-油料类-大豆</div>
<div class="t td" style="left:1901px;top:996px;width:400px;text-align:center">黄豆</div>
<div class="t td op" style="left:2543px;top:996px">编辑</div>
<div class="t td" style="left:2594px;top:996px;color:#c0c4cc">/</div>
<div class="t td op" style="left:2614px;top:996px">删除</div>
<div class="a" style="left:757px;top:1044px;width:2086px;height:89px;background:#fafafa;border-top:1px solid #e9eaec"></div>
<div class="t td" style="left:774px;top:1080px">10</div>
<svg class="a" style="left:1080px;top:1056px" width="60" height="56" viewBox="0 0 60 56" preserveAspectRatio="none"><defs><filter id="gnf" x="-5%" y="-5%" width="110%" height="110%"><feGaussianBlur stdDeviation="0.6"/></filter></defs><rect width="60" height="56" fill="#fff"/><g filter="url(#gnf)">
<path d="M1,25 C4,22 8,20 9,16 L11,5 L17,6 L17,18 L20,8 L25,8 L27,18 L29,5 L35,4 L36,16 L40,5 L44,5 L46,14 L50,6 L56,8 L56,22 L59,28 C56,38 50,46 40,48 C30,50 20,50 12,44 C6,40 2,32 1,25 Z" fill="#f0e4c4"/>
<g fill="#e47a8c"><rect x="11" y="4" width="6" height="10" rx="2"/><rect x="19" y="6" width="6" height="9" rx="2"/><rect x="28" y="4" width="5" height="10" rx="2"/><rect x="35" y="4" width="5" height="10" rx="2"/><rect x="47" y="5" width="7" height="9" rx="2"/><rect x="38" y="25" width="5" height="6" rx="2"/></g>
<path d="M14,30 C20,40 30,44 40,42 M28,28 V46 M18,16 V30 M44,14 V28" stroke="#c8a870" stroke-width="1.4" fill="none"/>
<path d="M20,20 L22,36 M33,18 L32,32" stroke="#fff" stroke-width="1.5" opacity="0.8"/>
</g></svg>
<div class="t td" style="left:1406px;top:1080px;width:400px;text-align:center">蔬菜作物-茎菜类-生姜</div>
<div class="t td" style="left:1901px;top:1080px;width:400px;text-align:center">嫩姜</div>
<div class="t td op" style="left:2543px;top:1080px">编辑</div>
<div class="t td" style="left:2594px;top:1080px;color:#c0c4cc">/</div>
<div class="t td op" style="left:2614px;top:1080px">删除</div>
<div class="a" style="left:756px;top:174px;width:2088px;height:959px;border:1px solid #e0e1e3"></div>
<div class="a" style="left:2531px;top:232px;width:60px;height:65px;border:2px solid #e5141b"></div>
<div class="t pg" style="left:2213px;top:1167px">共 26 条</div>
<div class="ob" style="left:2304px;top:1156px;width:149px;height:42px;border-color:#dcdddf"></div>
<div class="t pg" style="left:2316px;top:1167px;color:#333">10条/页</div>
<svg class="a" style="left:2423px;top:1172px" width="18" height="11" viewBox="0 0 18 11"><path d="M1.5,1.5 L9,9 L16.5,1.5" fill="none" stroke="#2f5bd6" stroke-width="1.8"/></svg>
<svg class="a" style="left:2488px;top:1168px" width="10" height="17" viewBox="0 0 10 17"><path d="M8.5,1 L1.5,8.5 L8.5,16" fill="none" stroke="#c0c4cc" stroke-width="1.6"/></svg>
<div class="t pg" style="left:2527px;top:1167px;color:#2351d3;font-weight:bold">1</div>
<div class="t pg" style="left:2562px;top:1167px;color:#333">2</div>
<div class="t pg" style="left:2599px;top:1167px;color:#333">3</div>
<svg class="a" style="left:2634px;top:1168px" width="10" height="17" viewBox="0 0 10 17"><path d="M1.5,1 L8.5,8.5 L1.5,16" fill="none" stroke="#333" stroke-width="1.6"/></svg>
<div class="t pg" style="left:2681px;top:1167px">前往</div>
<div class="ob" style="left:2730px;top:1156px;width:83px;height:42px;border-color:#dcdddf"></div>
<div class="t pg" style="left:2767px;top:1167px;color:#333">1</div>
<div class="t pg" style="left:2825px;top:1167px">页</div>
<!--/MAIN-->
</body></html>
